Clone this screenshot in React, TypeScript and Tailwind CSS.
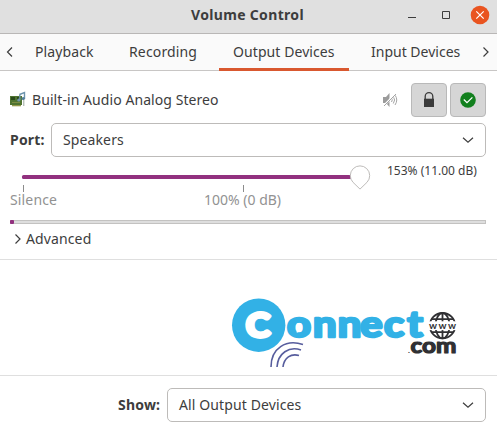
import type { ReactNode } from "react";

function Chevron({ dir, className = "" }: { dir: "left" | "right" | "down"; className?: string }) {
  const d = { left: "M8 1.5L3.5 6L8 10.5", right: "M3.5 1.5L8 6L3.5 10.5", down: "M1 3.8L6 8.2L11 3.8" }[dir];
  return (
    <svg viewBox="0 0 12 12" className={`size-3 shrink-0 ${className}`} fill="none" stroke="#3d3d3d" strokeWidth="1.2">
      <path d={d} />
    </svg>
  );
}

function TitleBar() {
  return (
    <header className="flex h-[34px] border-b border-[#b9b7b6] bg-[#e0e0e0]">
      <h1 className="w-[400px] pl-[191px] pt-[5px] text-[14px] leading-5 font-bold tracking-[0.33px]">Volume Control</h1>
      <svg viewBox="0 0 97 33" className="h-[33px] w-[97px]" fill="none" stroke="#3d3d3d">
        <path d="M8 17.5h8" />
        <path d="M42.5 11.5h7v7h-7z" />
        <circle cx="80" cy="15" r="9.3" fill="#e95420" stroke="none" />
        <path d="M76.3 11.3l7.4 7.4M83.7 11.3l-7.4 7.4" stroke="#fff" strokeWidth="1.2" />
      </svg>
    </header>
  );
}

function Tabs() {
  return (
    <nav className="flex h-[37px] bg-[#fafafa] leading-5 shadow-[inset_0_-1px_#c8c6c5]">
      <Chevron dir="left" className="mt-3 ml-1" />
      <span className="ml-[19px] w-[94px] pt-2 tracking-[0.1px]">Playback</span>
      <span className="w-[90px] pt-2 tracking-[0.15px]">Recording</span>
      <span className="w-[130px] border-b-3 border-[#d9582f] pt-2 pl-[14px] tracking-[0.08px]">Output Devices</span>
      <span className="w-[131px] pt-2 pl-[22px]">Input Devices</span>
      <Chevron dir="right" className="mt-3" />
    </nav>
  );
}

function Combo({ children }: { children: ReactNode }) {
  return (
    <button className="flex h-[34px] flex-1 items-center justify-between rounded-[5px] border border-[#bdbbb9] bg-white pr-[11px] pl-[11px] text-left leading-5">
      <span className="tracking-[0.12px]">{children}</span>
      <Chevron dir="down" />
    </button>
  );
}

function DeviceRow() {
  return (
    <div className="flex h-[34px] items-center">
      <svg viewBox="0 0 18 18" className="size-[18px]">
        <path d="M0 5h12v9H0z" fill="#4f7430" />
        <path d="M1 6h4v3H1zM7 6h3v3H7z" fill="#2b4a1c" />
        <path d="M2 11h8v1H2z" fill="#7b8c42" />
        <path d="M2 14h9v1.3H2z" fill="#93994b" />
        <path d="M13.8 7v8" stroke="#9ba79f" strokeWidth="1" />
        <path d="M9.5 3.5l5-2v6.5M9.8 9V3.5" fill="none" stroke="#6d94ad" strokeWidth="1.4" />
        <circle cx="8.8" cy="9" r="1.6" fill="#7095ad" />
        <circle cx="13.2" cy="7.5" r="1.6" fill="#537e98" />
      </svg>
      <span className="mb-[2px] ml-1 w-[350px] tracking-[0.07px]">Built-in Audio Analog Stereo</span>
      <svg viewBox="0 0 16 16" className="size-4" fill="none" stroke="#a5a5a5">
        <path d="M1 5h3l3.5-4v14L4 11H1z" fill="#9b9b9b" stroke="none" />
        <path d="M9.5 6q1.5 2 0 4M11.3 4.5q2.6 3.5 0 7M13 3q3.5 5 0 10" />
        <path d="M1.5 14L13.5 2" stroke="white" strokeWidth="2" />
        <path d="M2 14L14 2" strokeWidth="1" />
      </svg>
      <button className="ml-[13px] grid h-[34px] w-9 place-items-center rounded-[4px] border border-[#b9b9b9] bg-[#d6d6d6]">
        <svg viewBox="0 0 16 16" className="size-4">
          <path d="M4.2 8V4.5a3.8 3.8 0 017.6 0V8" fill="none" stroke="#3b3b3b" strokeWidth="1.3" />
          <path d="M3 6.7h10V15H3z" fill="#3b3b3b" />
        </svg>
      </button>
      <button className="ml-[3px] grid h-[34px] w-9 place-items-center rounded-[4px] border border-[#b9b9b9] bg-[#d6d6d6]">
        <svg viewBox="0 0 16 16" className="size-4">
          <circle cx="8" cy="8" r="7.8" fill="#12801e" />
          <path d="M3.8 7.5L7 10.6L12.4 5.4" fill="none" stroke="#fff" strokeWidth="1.3" />
        </svg>
      </button>
    </div>
  );
}

function VolumeScale() {
  return (
    <div className="flex h-[63px] pt-2">
      <div className="w-[377px]">
        <svg viewBox="0 0 377 28" className="h-7 w-[377px]">
          <rect x="12" y="10" width="334" height="4" rx="1.5" fill="#92317f" />
          <path d="M13.5 20v7M233.5 20v7" stroke="#8c8c8c" />
          <path d="M343 18.5A9.7 9.7 0 11357 18.5L350 25.3Z" transform="translate(0 -1.2)" fill="#fff" stroke="#bebcba" />
        </svg>
        <div className="-mt-[3px] flex leading-5 text-[#929292]">
          <span className="w-[194px] tracking-[0.15px]">Silence</span>
          <span>100% (0 dB)</span>
        </div>
      </div>
      <span className="-mt-[4px] text-[12px] leading-5 whitespace-nowrap">153% (11.00 dB)</span>
    </div>
  );
}

function Logo() {
  return (
    <svg viewBox="0 0 240 92" className="h-[92px] w-60" fontFamily="Lato, sans-serif" fontWeight="700" strokeLinejoin="round">
      <circle cx="28.7" cy="43.2" r="26.7" fill="#32b1e6" />
      <text x="16" y="55" fontSize="32" textLength="24" lengthAdjust="spacingAndGlyphs" fill="#fff" stroke="#fff" strokeWidth="3.8">C</text>
      <text transform="scale(1.16 1)" x="49.2 71.5 92.8 112.2 132.8 152.8" y="54.8" fontSize="36" fill="#32b1e6" stroke="#32b1e6" strokeWidth="2.7">onnect</text>
      <path d="M66.5 49.5q2-1 2-2.6q-2.5-.7-2-2.9t3-2q3 .5 2.4 4t-5 4.8z" fill="#fff" />
      <g fill="none" stroke="#575d9d" strokeWidth="1.6">
        <path d="M41 85C41 66 56 57 73 62.5" />
        <path d="M47 85C48 71 59 64 71 68" />
        <path d="M53 85C54 76 61 71 69 73.5" />
      </g>
      <g fill="none" stroke="#303033" strokeWidth="1.8">
        <circle cx="212.5" cy="43.7" r="12.7" />
        <ellipse cx="212.5" cy="43.7" rx="7" ry="12.7" />
        <path d="M212.5 31v26M202 37.2h21M202 50.2h21" />
      </g>
      <path d="M198 39.3h29v8.8h-29z" fill="#fff" />
      <text x="199" y="46.5" fontSize="10" textLength="27" fill="#303033">www</text>
      <text y="71.3" fontSize="21" fill="#303033" stroke="#303033" strokeWidth="1.2">
        <tspan x="178" fontSize="8" strokeWidth="0">.</tspan>
        <tspan x="180.5" textLength="46" lengthAdjust="spacingAndGlyphs">com</tspan>
      </text>
    </svg>
  );
}

export default function App() {
  return (
    <div className="h-[431px] w-[497px] overflow-hidden bg-white font-['Noto_Sans',sans-serif] text-[14px] text-[#3d3d3d]">
      <TitleBar />
      <Tabs />
      <main className="h-[189px] border-b border-[#dfdfdf] pt-3 pr-[11px] pl-[10px]">
        <DeviceRow />
        <div className="mt-[6px] flex items-center">
          <span className="mb-[2px] w-[41px] font-bold tracking-[0.2px]">Port:</span>
          <Combo>Speakers</Combo>
        </div>
        <VolumeScale />
        <div className="flex h-1 border border-[#c3c2c1] bg-[#dedede]">
          <div className="-my-px -ml-px h-1 w-1 rounded-[1px] bg-[#92317f]" />
        </div>
        <div className="mt-[5px] flex items-center leading-5">
          <Chevron dir="right" className="ml-[2px]" />
          <span className="ml-[2px] tracking-[0.12px]">Advanced</span>
        </div>
      </main>
      <section className="flex h-[116px] border-b border-[#dfdfdf] pt-[22px] pl-[230px]">
        <Logo />
      </section>
      <footer className="flex items-center pt-3 pr-[11px] pl-[118px]">
        <span className="mb-[2px] w-[49px] font-bold tracking-[0.2px]">Show:</span>
        <Combo>All Output Devices</Combo>
      </footer>
    </div>
  );
}
